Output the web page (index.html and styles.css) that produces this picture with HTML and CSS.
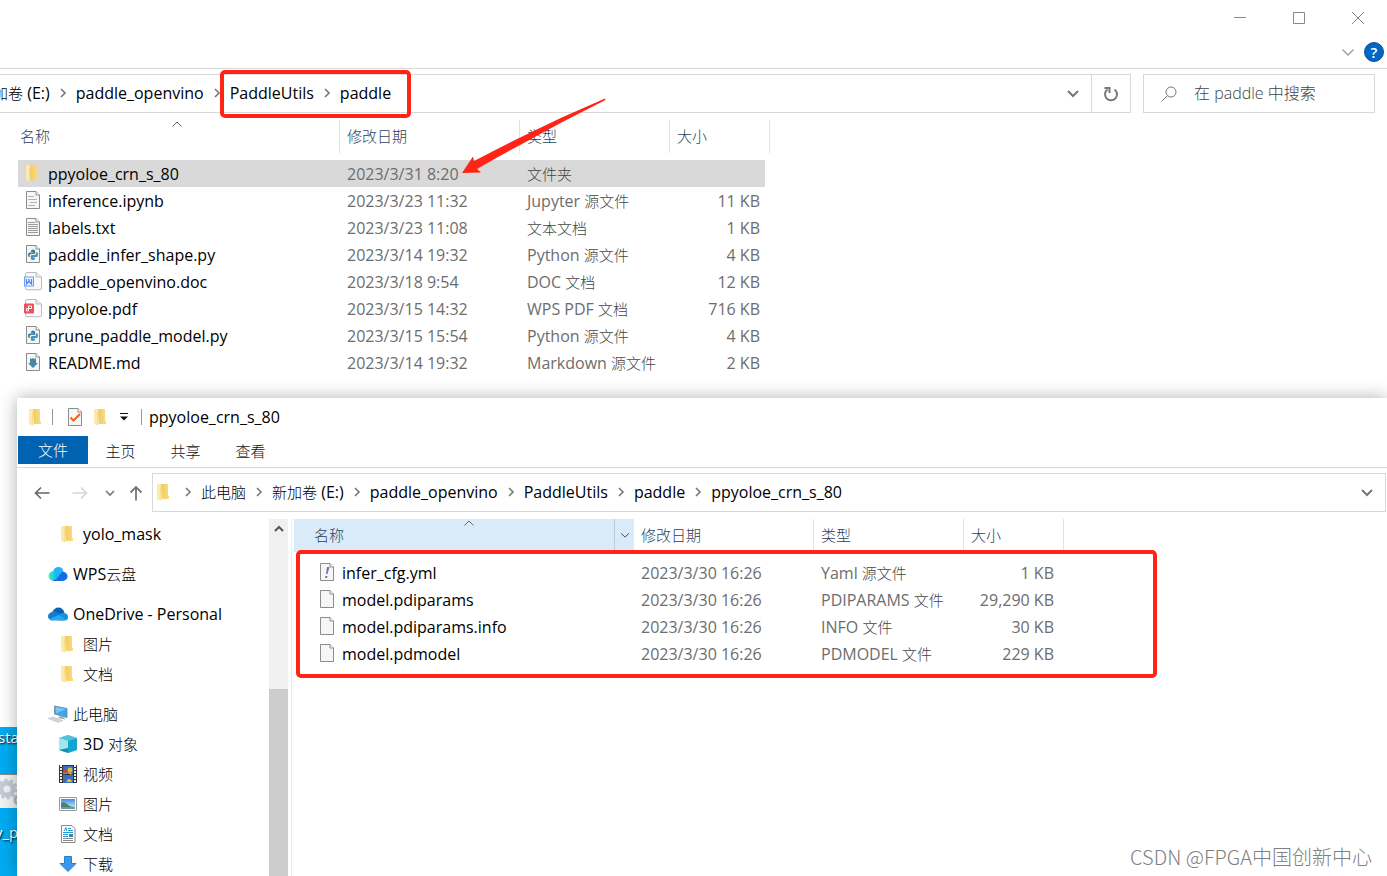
FILE: index.html
```
<!DOCTYPE html>
<html lang="zh-CN">
<head>
<meta charset="utf-8">
<title>ppyoloe_crn_s_80</title>
<link rel="stylesheet" href="styles.css">
</head>
<body>
<svg class="defs" aria-hidden="true">
  <defs>
    <linearGradient id="gold" x1="0" x2="1"><stop offset="0" stop-color="#f0cb64"/><stop offset="1" stop-color="#fbdc82"/></linearGradient>
    <linearGradient id="wps" x1="0" x2="1"><stop offset="0" stop-color="#3ff0c0"/><stop offset="1" stop-color="#12a9f5"/></linearGradient>
    <linearGradient id="sky" x1="0" y1="0" x2="0" y2="1"><stop offset="0" stop-color="#3f8fe0"/><stop offset="1" stop-color="#e4f5fb"/></linearGradient>
    <symbol id="folder" viewBox="0 0 18 18"><path d="M4 1H11V13H12V16H5Z" fill="url(#gold)"/><path d="M0 1H4V4L4 17.500L0 16Z" fill="#ffe9a8"/><path d="M4 4V17" stroke="#e9bf55" stroke-width=".6"/></symbol>
    <symbol id="page" viewBox="0 0 18 18"><path d="M.5.500H10L13.500 4V17.500H.5Z" fill="#f5f6f6" stroke="#8c8c8c"/><path d="M10 .5V4H13.500" fill="#fff" stroke="#8c8c8c"/></symbol>
    <symbol id="notebook" viewBox="0 0 18 18"><use href="#page" width="18" height="18"/><path d="M2 5.500H8M2 8.500H11M4 11.500H11M2 14.500H9" stroke="#b2b2b2"/></symbol>
    <symbol id="text" viewBox="0 0 18 18"><use href="#page" width="18" height="18"/><path d="M2 4.500H9M2 6.500H12M2 8.500H12M2 10.500H12M2 12.500H12M2 14.500H12" stroke="#9b9b9b"/></symbol>
    <symbol id="python" viewBox="0 0 18 18"><use href="#page" width="18" height="18"/><path d="M5 6Q5 4.500 7 4.500T9.200 6V8Q9.200 9 8 9H5Q3.700 9 3.700 10.500V12H3Q2 12 2 9.700T3.500 7.500H7V7H5Z" fill="#3d7fa0"/><path d="M10 7.300H11Q12 7.500 12 9.700T10.500 12H7V12.500H9V13.500Q9 15 7 15T4.800 13.500V11Q5 10 6 10H9Q10 9.800 10 8.500Z" fill="#4b93b4"/></symbol>
    <symbol id="doc" viewBox="2 0 18 18"><path d="M3 .5H12L17.500 5V16Q17.500 18 16 17.700H3Q1.500 17.500 1.500 16V2Q1.500.5 3 .5Z" fill="#fafafa" stroke="#bbb"/><path d="M12 .5V5H17.500" fill="#eee" stroke="#bbb"/><rect x=".5" y="5" width="9" height="9" fill="#eef4ff" stroke="#6d9cf4"/><path d="M2.500 7V12L5 9.500L7.500 12V7M5 7V9.500" fill="none" stroke="#4f86ee" stroke-width="1.300"/></symbol>
    <symbol id="pdf" viewBox="2 0 18 18"><path d="M3 .5H12L17.500 5V16Q17.500 18 16 17.700H3Q1.500 17.500 1.500 16V2Q1.500.5 3 .5Z" fill="#fafafa" stroke="#bbb"/><path d="M12 .5V5H17.500" fill="#eee" stroke="#bbb"/><rect y="4.500" width="10" height="10" rx="1" fill="#ec5357"/><path d="M4 7H7.500V9.500H2.500V12H4.500V7" fill="none" stroke="#fff" stroke-width=".9"/></symbol>
    <symbol id="markdown" viewBox="0 0 18 18"><use href="#page" width="18" height="18"/><path d="M4 5L5.500 6L7 5L8.500 6L10 5V10H12L7 15L2 10H4Z" fill="#4788a8"/></symbol>
    <symbol id="yaml" viewBox="0 0 18 18"><use href="#page" width="18" height="18"/><path d="M7 4H9.500L7.500 11H6ZM5.500 13H7.500L7 15H5Z" fill="#8f62b5"/></symbol>
    <symbol id="check" viewBox="0 0 18 18"><use href="#page" width="18" height="18"/><path d="M2.500 9.500L5.500 12.500L12 6" fill="none" stroke="#ee6420" stroke-width="2"/></symbol>
    <symbol id="next" viewBox="0 0 26 14"><path d="M11 3L15 7L11 11" fill="none" stroke="#777" stroke-width="1.600"/></symbol>
    <symbol id="down" viewBox="0 0 14 14"><path d="M2 5L7 10L12 5" fill="none" stroke="currentColor" stroke-width="2"/></symbol>
    <symbol id="thin" viewBox="0 0 14 14"><path d="M1.500 4.500L7 10L12.500 4.500" fill="none" stroke="currentColor" stroke-width="1.300"/></symbol>
    <symbol id="sort" viewBox="0 0 10 6"><path d="M.5 5.500L5 1L9.500 5.500" fill="none" stroke="#666"/></symbol>
    <symbol id="wpscloud" viewBox="0 0 20 20"><path d="M5 8Q6 3 10.500 3T15.500 8L12 16H5Z" fill="#18b8fc"/><circle cx="5.200" cy="12" r="4.700" fill="url(#wps)"/><path d="M4 16.700Q9 16 11.500 11Q13 8 15 7.700Q19.500 8.500 19.500 12.300T15 17H5Z" fill="#176ae5"/></symbol>
    <symbol id="onedrive" viewBox="0 0 20 20"><path d="M4 9Q6 3.500 10.500 3.500T16.500 9L10 12Z" fill="#0b62b4"/><path d="M5 7.500Q8 7 10 9L14 11L4 16.500Q0 15.500 0 12.300T5 7.500Z" fill="#147bd1"/><path d="M10.500 11Q12.500 8.500 16 9Q20 9.500 20 13T16.500 16.500H10Z" fill="#1490df"/><path d="M1.500 15L10.500 11L18.500 15.500Q17.500 16.500 16 16.500H4Q2.500 16.500 1.500 15Z" fill="#2aa8ee"/></symbol>
    <symbol id="pc" viewBox="0 0 20 20"><path d="M6.500 2L19 4.500V13.500L6.500 10Z" fill="#3ba7ee" stroke="#6f8492" stroke-width=".8"/><path d="M7.500 3L18 5L8 9.500Z" fill="#74c5fa"/><path d="M12 12L16 13.500L17.500 15.500L10 14Z" fill="#a0a9b1"/><path d="M0 14.500L5 13L15 16.500L10 18.500Z" fill="#ced3d9" stroke="#b1b6bd" stroke-width=".4"/></symbol>
    <symbol id="cube" viewBox="2 0 18 18"><path d="M9 0L18 3V15L9 18L0 15V3Z" fill="#7fdbe5"/><path d="M9 0L18 3L9 6L0 3Z" fill="#4fc4d4"/><path d="M9 6L18 3V15L9 18Z" fill="#12a3d0"/><path d="M0 3L9 6V13L0 15Z" fill="#9ceaf0"/><path d="M0 15L9 13V18Z" fill="#1a8ca6"/></symbol>
    <symbol id="video" viewBox="2 0 18 18"><path d="M0 0H18V18H0Z" fill="#333"/><path d="M4 1H14V9H4ZM4 10H14V18H4Z" fill="#3f6dba"/><path d="M2 0V18M16 0V18" stroke="#eee" stroke-width="2" stroke-dasharray="2 1"/><circle cx="11" cy="5" r="2.500" fill="#d8bb31"/><circle cx="6" cy="6" r="2" fill="#bd4945"/><path d="M8 7L13 8L12 10ZM8 15Q12 12 13 17H8Z" fill="#e0bc37"/><path d="M4 8H8V9H4Z" fill="#7cb955"/></symbol>
    <symbol id="picture" viewBox="2 0 18 18"><path d="M.5 2.500H17.500V15.500H.5Z" fill="#fff" stroke="#999"/><path d="M2 4H16V14H2Z" fill="url(#sky)"/><path d="M2 8Q5 6 8 9T16 12V13H2Z" fill="#547e68"/><path d="M2 12H16V14H2Z" fill="#5c9eb3"/></symbol>
    <symbol id="document" viewBox="2 0 18 18"><path d="M2.500.5H13L16 3.500V17.500H2.500Z" fill="#fff" stroke="#888"/><path d="M5 6L7 2.500L7.500 6M9 3.500H12M9 5.500H14M4 7.500H14M4 9.500H9M4 11.500H9" fill="none" stroke="#2698cf"/><path d="M10 9H14V12H10Z" fill="#3c86a4"/><path d="M4 13.500H14M4 15.500H14" stroke="#888"/></symbol>
    <symbol id="download" viewBox="2 0 18 18"><path d="M5.500 1.500H12.500V8.500H17L9 16.500L1 8.500H5.500Z" fill="#3b99e9" stroke="#2382d0"/></symbol>
  </defs>
</svg>

<main class="desktop">
  <div class="shortcuts">
    <span class="shortcut">sta</span>
    <span class="tile"><svg viewBox="0 0 17 34"><circle cx="7" cy="14" r="6" fill="none" stroke="#c3cdd5" stroke-width="5"/><circle cx="7" cy="14" r="9" fill="none" stroke="#c3cdd5" stroke-width="3" stroke-dasharray="3 2.650"/><circle cx="19" cy="25" r="4" fill="none" stroke="#aebac4" stroke-width="3"/></svg></span>
    <span class="shortcut under">v_p</span>
  </div>

  <section class="window back">
    <header class="caption">
      <button aria-label="最小化"><svg viewBox="0 0 14 14"><path d="M1 6.500H13" stroke="#888"/></svg></button>
      <button aria-label="最大化"><svg viewBox="0 0 14 14"><path d="M1.500 1.500H12.500V12.500H1.500Z" fill="none" stroke="#888"/></svg></button>
      <button aria-label="关闭"><svg viewBox="0 0 14 14"><path d="M1 1L13 13M13 1L1 13" stroke="#888"/></svg></button>
    </header>
    <div class="ribbon-end">
      <button aria-label="展开功能区"><svg class="i14 faint"><use href="#thin"/></svg></button>
      <button class="help" aria-label="帮助">?</button>
    </div>
    <div class="bar">
      <nav class="address cut">
        <a href="#"><span class="zh">加卷</span> (E:)</a><svg class="next"><use href="#next"/></svg><a href="#">paddle_openvino</a><svg class="next"><use href="#next"/></svg><a href="#">PaddleUtils</a><svg class="next"><use href="#next"/></svg><a href="#">paddle</a>
        <button class="drop" aria-label="历史记录"><svg class="i14"><use href="#down"/></svg></button>
      </nav>
      <button class="refresh" aria-label="刷新"><svg viewBox="0 0 16 16"><path d="M11.500 3.500A6 6 0 1 1 4.500 3.500" fill="none" stroke="#777" stroke-width="2"/><path d="M1.500 2H6.500V7" fill="none" stroke="#777" stroke-width="2"/></svg></button>
      <label class="search"><svg viewBox="0 0 16 16"><circle cx="10" cy="6" r="5" fill="none" stroke="#777"/><path d="M6.500 9.500L.5 15.500" stroke="#777"/></svg><input type="text" aria-label="搜索" placeholder="在 paddle 中搜索"></label>
    </div>
    <table class="files">
      <colgroup><col class="c-name"><col class="c-date"><col class="c-type"><col class="c-size"></colgroup>
      <thead><tr><th>名称<svg class="sort"><use href="#sort"/></svg></th><th>修改日期</th><th>类型</th><th>大小</th></tr></thead>
      <tbody>
        <tr class="selected"><td><svg class="i18"><use href="#folder"/></svg>ppyoloe_crn_s_80</td><td>2023/3/31 8:20</td><td><span class="zh">文件夹</span></td><td></td></tr>
        <tr><td><svg class="i18"><use href="#notebook"/></svg>inference.ipynb</td><td>2023/3/23 11:32</td><td>Jupyter <span class="zh">源文件</span></td><td>11 KB</td></tr>
        <tr><td><svg class="i18"><use href="#text"/></svg>labels.txt</td><td>2023/3/23 11:08</td><td><span class="zh">文本文档</span></td><td>1 KB</td></tr>
        <tr><td><svg class="i18"><use href="#python"/></svg>paddle_infer_shape.py</td><td>2023/3/14 19:32</td><td>Python <span class="zh">源文件</span></td><td>4 KB</td></tr>
        <tr><td><svg class="i18"><use href="#doc"/></svg>paddle_openvino.doc</td><td>2023/3/18 9:54</td><td>DOC <span class="zh">文档</span></td><td>12 KB</td></tr>
        <tr><td><svg class="i18"><use href="#pdf"/></svg>ppyoloe.pdf</td><td>2023/3/15 14:32</td><td>WPS PDF <span class="zh">文档</span></td><td>716 KB</td></tr>
        <tr><td><svg class="i18"><use href="#python"/></svg>prune_paddle_model.py</td><td>2023/3/15 15:54</td><td>Python <span class="zh">源文件</span></td><td>4 KB</td></tr>
        <tr><td><svg class="i18"><use href="#markdown"/></svg>README.md</td><td>2023/3/14 19:32</td><td>Markdown <span class="zh">源文件</span></td><td>2 KB</td></tr>
      </tbody>
    </table>
  </section>

  <section class="window front">
    <header class="title">
      <svg class="i18"><use href="#folder"/></svg><i class="rule"></i>
      <button aria-label="属性"><svg class="i18"><use href="#check"/></svg></button>
      <button aria-label="新建文件夹"><svg class="i18"><use href="#folder"/></svg></button>
      <button class="quick" aria-label="自定义快速访问工具栏"><svg viewBox="0 0 8 8"><path d="M0 3.500H8L4 7.500Z" fill="#111"/><path d="M0 .5H8" stroke="#111"/></svg></button>
      <i class="rule"></i><span class="name">ppyoloe_crn_s_80</span>
    </header>
    <nav class="tabs"><button class="active">文件</button><button>主页</button><button>共享</button><button>查看</button></nav>
    <div class="bar">
      <div class="travel">
        <button aria-label="后退"><svg viewBox="0 0 16 16"><path d="M15.500 8H1.500M7 2.500L1.500 8L7 13.500" fill="none" stroke="#666" stroke-width="1.600"/></svg></button>
        <button class="forward" aria-label="前进"><svg viewBox="0 0 16 16"><path d="M.5 8H14.500M9 2.500L14.500 8L9 13.500" fill="none" stroke="#d5d5d5" stroke-width="1.600"/></svg></button>
        <button class="small" aria-label="最近位置"><svg viewBox="0 0 10 10"><path d="M1 3L5 7L9 3" fill="none" stroke="#777" stroke-width="1.600"/></svg></button>
        <button aria-label="上移"><svg viewBox="0 0 16 16"><path d="M8 15.500V2M2.500 7.500L8 2L13.500 7.500" fill="none" stroke="#777" stroke-width="1.800"/></svg></button>
      </div>
      <nav class="address">
        <svg class="i18"><use href="#folder"/></svg><svg class="next"><use href="#next"/></svg><a class="zh" href="#">此电脑</a><svg class="next"><use href="#next"/></svg><a href="#"><span class="zh">新加卷</span> (E:)</a><svg class="next"><use href="#next"/></svg><a href="#">paddle_openvino</a><svg class="next"><use href="#next"/></svg><a href="#">PaddleUtils</a><svg class="next"><use href="#next"/></svg><a href="#">paddle</a><svg class="next"><use href="#next"/></svg><a href="#">ppyoloe_crn_s_80</a>
        <button class="drop" aria-label="历史记录"><svg class="i14"><use href="#down"/></svg></button>
      </nav>
    </div>
    <div class="content">
      <aside class="tree">
        <ul><li class="sub"><svg class="i18"><use href="#folder"/></svg>yolo_mask</li></ul>
        <ul><li><svg class="i20"><use href="#wpscloud"/></svg>WPS<span class="zh">云盘</span></li></ul>
        <ul><li><svg class="i20"><use href="#onedrive"/></svg>OneDrive - Personal</li><li class="sub zh"><svg class="i18"><use href="#folder"/></svg>图片</li><li class="sub zh"><svg class="i18"><use href="#folder"/></svg>文档</li></ul>
        <ul><li class="zh"><svg class="i20"><use href="#pc"/></svg>此电脑</li><li class="sub"><svg class="i18"><use href="#cube"/></svg><span>3D <span class="zh">对象</span></span></li><li class="sub zh"><svg class="i18"><use href="#video"/></svg>视频</li><li class="sub zh"><svg class="i18"><use href="#picture"/></svg>图片</li><li class="sub zh"><svg class="i18"><use href="#document"/></svg>文档</li><li class="sub zh"><svg class="i18"><use href="#download"/></svg>下载</li></ul>
      </aside>
      <div class="scroll"><button aria-label="向上滚动"><svg viewBox="0 0 12 12"><path d="M2 8L6 4L10 8" fill="none" stroke="#555" stroke-width="2"/></svg></button><span class="thumb"></span></div>
      <div class="pane">
        <table class="files">
          <colgroup><col class="c-name"><col class="c-date"><col class="c-type"><col class="c-size"></colgroup>
          <thead><tr><th class="hot">名称<svg class="sort"><use href="#sort"/></svg><button class="filter" aria-label="筛选"><svg class="i10"><use href="#thin"/></svg></button></th><th>修改日期</th><th>类型</th><th>大小</th></tr></thead>
          <tbody>
            <tr><td><svg class="i18"><use href="#yaml"/></svg>infer_cfg.yml</td><td>2023/3/30 16:26</td><td>Yaml <span class="zh">源文件</span></td><td>1 KB</td></tr>
            <tr><td><svg class="i18"><use href="#page"/></svg>model.pdiparams</td><td>2023/3/30 16:26</td><td>PDIPARAMS <span class="zh">文件</span></td><td>29,290 KB</td></tr>
            <tr><td><svg class="i18"><use href="#page"/></svg>model.pdiparams.info</td><td>2023/3/30 16:26</td><td>INFO <span class="zh">文件</span></td><td>30 KB</td></tr>
            <tr><td><svg class="i18"><use href="#page"/></svg>model.pdmodel</td><td>2023/3/30 16:26</td><td>PDMODEL <span class="zh">文件</span></td><td>229 KB</td></tr>
          </tbody>
        </table>
      </div>
    </div>
  </section>

  <div class="mark path"></div>
  <div class="mark list"></div>
  <svg class="arrow" viewBox="0 0 146 78"><path d="M144.500 3Q102 24 61 47L37 60L16 72L20 75.500L1 76L12 59.500L13 64L56 42Q100 20 144 1.500Z" fill="#ff2416"/></svg>
  <p class="watermark">CSDN @FPGA中国创新中心</p>
</main>
</body>
</html>
```
FILE: styles.css
```
* { box-sizing: border-box; }
body { margin: 0; overflow: hidden; font: 16px/20px "Open Sans", "Noto Sans", "Noto Sans CJK SC", sans-serif; color: #000; }
button { border: 0; padding: 0; margin: 0; background: none; font: inherit; color: inherit; display: flex; align-items: center; justify-content: center; }
a { color: inherit; text-decoration: none; white-space: nowrap; }
ul { list-style: none; margin: 0; padding: 0; }
svg { display: block; flex: none; }
svg, symbol { overflow: visible; }
.defs { position: absolute; width: 0; height: 0; }
.zh, th, .tabs { font-size: 15px; font-weight: 300; }
.i10 { width: 10px; height: 10px; }
.i14 { width: 14px; height: 14px; }
.i18 { width: 18px; height: 18px; }
.i20 { width: 20px; height: 20px; }
.faint { color: #999; }

.desktop { position: relative; height: 100vh; overflow: hidden; background: #00acf2; }
.window { position: absolute; background: #fff; right: 0; }
.back { top: 0; left: 0; height: 727px; }
.front { top: 398px; left: 17px; bottom: 0; display: flex; flex-direction: column; box-shadow: 0 0 16px rgba(0, 0, 0, .32); }

.shortcuts { position: absolute; top: 727px; left: 0; width: 17px; overflow: hidden; }
.shortcut { display: block; height: 47px; color: #fff; font-size: 15px; text-shadow: 1px 1px 2px #000; white-space: nowrap; margin-left: -2px; }
.under { padding-top: 14px; margin-left: -5px; }
.tile { display: block; height: 34px; background: #f3f3f3; border-top: 1px solid #888; }
.tile svg { width: 17px; height: 34px; }

.caption { display: flex; justify-content: flex-end; height: 36px; }
.caption button { width: 59px; }
.caption svg { width: 14px; height: 14px; }
.ribbon-end { display: flex; justify-content: flex-end; align-items: center; gap: 9px; height: 33px; padding-right: 3px; border-bottom: 1px solid #d9d9d9; }
.help { width: 20px; height: 20px; border-radius: 50%; background: #0067c5; border: 1px solid #174f86; color: #fff; font-size: 15px; font-weight: 600; }

.bar { display: flex; padding-top: 5px; }
.address { flex: 1; min-width: 0; display: flex; align-items: center; height: 39px; border: 1px solid #d9d9d9; padding: 0 0 1px 4px; }
.cut { border-left: 0; padding-left: 0; overflow: hidden; }
.cut a:first-child { margin-left: -7px; }
.next { width: 26px; height: 14px; }
.drop { margin-left: auto; width: 36px; height: 36px; color: #777; }
.refresh { width: 39px; border: 1px solid #d9d9d9; border-left: 0; }
.refresh svg, .search svg, .travel svg { width: 16px; height: 16px; }
.search { width: 232px; margin: 0 12px; border: 1px solid #d9d9d9; display: flex; align-items: center; padding-left: 17px; gap: 17px; }
.search input { flex: 1; min-width: 0; border: 0; padding: 0 0 2px; background: none; font: inherit; font-weight: 300; outline: 0; }
.search input::placeholder { color: #444; opacity: 1; }

.files { table-layout: fixed; border-collapse: separate; border-spacing: 0; width: 752px; margin: 7px 0 0 18px; }
.c-name { width: 322px; }
.c-date { width: 180px; }
.c-type { width: 150px; }
.c-size { width: 100px; }
th { position: relative; height: 33px; padding: 0 0 1px 7px; text-align: left; color: #2c3f60; border-right: 1px solid #e3e3e3; }
th:first-child { padding-left: 2px; }
thead::after { content: ""; display: block; height: 7px; }
td { height: 27px; padding: 0 0 0 7px; color: #6d6d6d; white-space: nowrap; }
td .zh { color: #444; }
td:first-child { color: #000; padding-left: 8px; }
td:first-child svg { display: inline-block; vertical-align: -2px; margin-right: 4px; }
td:last-child { text-align: right; padding: 0 5px 0 0; border-right: 5px solid transparent; background-clip: padding-box; }
.selected td { background-color: #d9d9d9; }
.sort { position: absolute; top: 1px; left: calc(50% - 7px); width: 10px; height: 6px; }

.title { display: flex; align-items: center; height: 38px; padding: 0 0 0 12px; }
.rule { width: 1px; height: 16px; background: #999; margin: 0 15px 0 5px; }
.title button { margin-right: 8px; }
.title .quick { width: 8px; margin: 0 6px 0 0; }
.quick svg { width: 8px; height: 8px; }
.quick + .rule { margin: 0 7px; }
.tabs { display: flex; height: 32px; border-bottom: 1px solid #d9d9d9; color: #111; }
.tabs button { width: 65px; height: 30px; }
.tabs .active { width: 70px; height: 28px; margin-left: 1px; background: #0063b1; color: #fff; }
.travel { display: flex; align-items: center; width: 135px; padding-left: 17px; }
.travel .forward { margin-left: 22px; }
.travel .small { margin: 0 13px 0 17px; }
.travel .small svg { width: 10px; height: 10px; }
.front .address { border-right: 1px solid #d9d9d9; margin-right: 1px; }
.content { flex: 1; min-height: 0; display: flex; padding-top: 7px; }
.tree { width: 252px; display: flex; flex-direction: column; gap: 10px; overflow: hidden; }
.tree li { height: 30px; display: flex; align-items: center; padding-left: 31px; white-space: nowrap; }
.tree svg { margin-right: 5px; }
.tree .sub { padding-left: 44px; }
.tree .sub svg { margin-right: 4px; }
.scroll { width: 19px; background: #f0f0f0; display: flex; flex-direction: column; }
.scroll button { height: 20px; margin-bottom: 150px; }
.scroll button svg { width: 12px; height: 12px; }
.thumb { flex: 1; background: #cdcdcd; }
.pane { flex: 1; min-width: 0; margin-left: 3px; border-left: 1px solid #eee; }
.pane .files { margin: 0 0 0 2px; width: 770px; }
.pane .c-name { width: 340px; }
.pane th:first-child { padding-left: 20px; border-right: 0; }
.pane td:first-child { padding-left: 26px; }
.pane .hot { background: #d9ebf9; }
.pane .sort { left: 50%; }
.filter { position: absolute; right: 0; top: 0; width: 20px; height: 32px; border-left: 1px solid #b9cbdd; }

.mark { position: absolute; border: 4px solid #ff2416; border-radius: 5px; }
.path { left: 220px; top: 70px; width: 191px; height: 48px; }
.list { left: 296px; top: 550px; width: 861px; height: 128px; }
.arrow { position: absolute; left: 461px; top: 97px; width: 146px; height: 78px; }
.watermark { position: absolute; right: 15px; bottom: 6px; margin: 0; font: 300 20px/26px "Noto Sans CJK SC", sans-serif; color: #808080; text-shadow: -1px -1px 0 #fff; }
```
